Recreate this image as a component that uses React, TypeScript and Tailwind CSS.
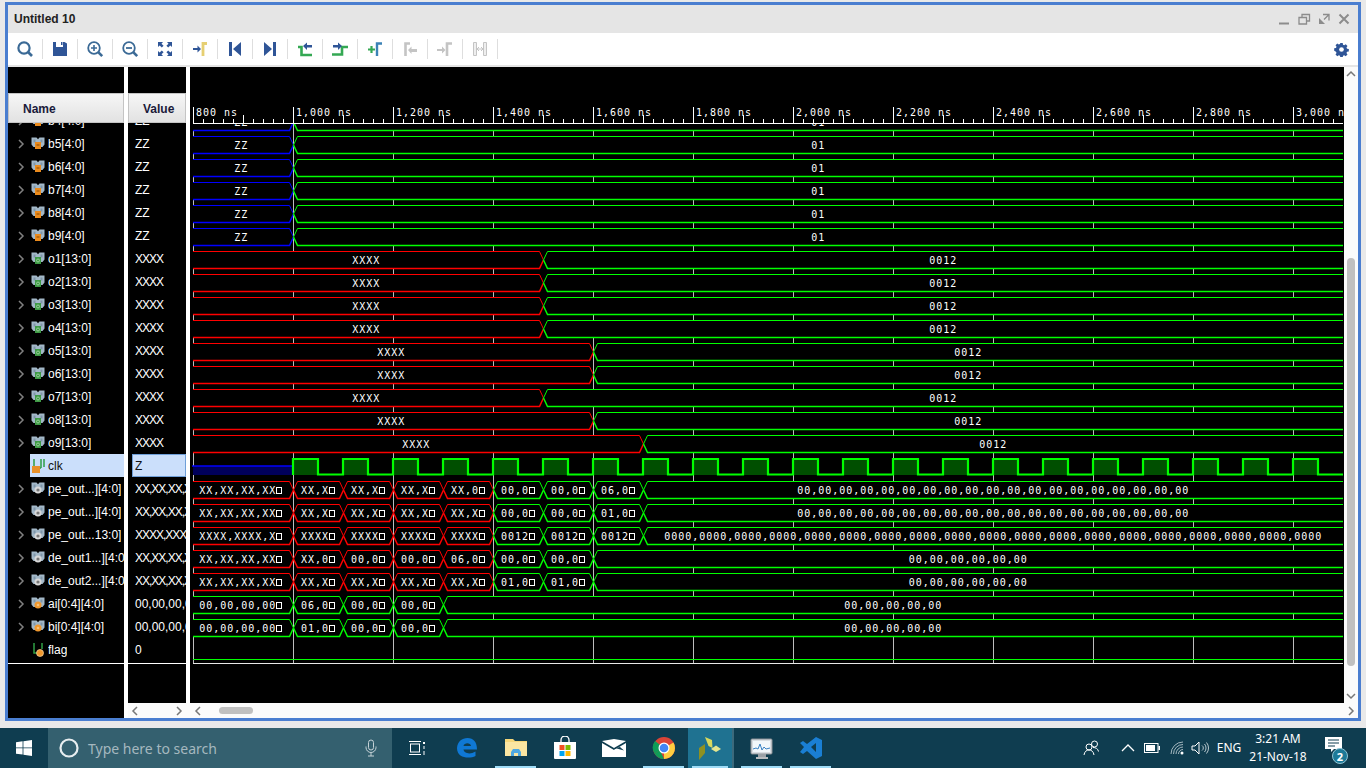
import React from "react";

const NAVY = "#2f5597";
const MONO = "'DejaVu Sans Mono', monospace";
const G = "#00ff00";
const R = "#ff0000";
const B = "#0000ff";

type Seg = [number, string, string];

const XL = "XX,XX,XX,XX□";
const OL = "00,00,00,00□";
const Z19 = Array(19).fill("00").join(",");
const Q19 = Array(19).fill("0000").join(",");
const Z6 = Array(6).fill("00").join(",");
const Z5 = Array(5).fill("00").join(",");

const waveRows: Seg[][] = [
  [[193, "ZZ", B], [293.5, "01", G]],
  [[193, "ZZ", B], [293.5, "01", G]],
  [[193, "ZZ", B], [293.5, "01", G]],
  [[193, "ZZ", B], [293.5, "01", G]],
  [[193, "ZZ", B], [293.5, "01", G]],
  [[193, "ZZ", B], [293.5, "01", G]],
  [[193, "XXXX", R], [543.5, "0012", G]],
  [[193, "XXXX", R], [543.5, "0012", G]],
  [[193, "XXXX", R], [543.5, "0012", G]],
  [[193, "XXXX", R], [543.5, "0012", G]],
  [[193, "XXXX", R], [593.5, "0012", G]],
  [[193, "XXXX", R], [593.5, "0012", G]],
  [[193, "XXXX", R], [543.5, "0012", G]],
  [[193, "XXXX", R], [593.5, "0012", G]],
  [[193, "XXXX", R], [643.5, "0012", G]],
];

const busRows: Seg[][] = [
  [[193, XL, R], [293.5, "XX,X□", R], [343.5, "XX,X□", R], [393.5, "XX,X□", R], [443.5, "XX,0□", R], [493.5, "00,0□", G], [543.5, "00,0□", G], [593.5, "06,0□", G], [643.5, Z19, G]],
  [[193, XL, R], [293.5, "XX,X□", R], [343.5, "XX,X□", R], [393.5, "XX,X□", R], [443.5, "XX,X□", R], [493.5, "00,0□", G], [543.5, "00,0□", G], [593.5, "01,0□", G], [643.5, Z19, G]],
  [[193, "XXXX,XXXX,X□", R], [293.5, "XXXX□", R], [343.5, "XXXX□", R], [393.5, "XXXX□", R], [443.5, "XXXX□", R], [493.5, "0012□", G], [543.5, "0012□", G], [593.5, "0012□", G], [643.5, Q19, G]],
  [[193, XL, R], [293.5, "XX,0□", R], [343.5, "00,0□", R], [393.5, "00,0□", R], [443.5, "06,0□", R], [493.5, "00,0□", G], [543.5, "00,0□", G], [593.5, Z6, G]],
  [[193, XL, R], [293.5, "XX,X□", R], [343.5, "XX,X□", R], [393.5, "XX,X□", R], [443.5, "XX,X□", R], [493.5, "01,0□", G], [543.5, "01,0□", G], [593.5, Z6, G]],
  [[193, OL, G], [293.5, "06,0□", G], [343.5, "00,0□", G], [393.5, "00,0□", G], [443.5, Z5, G]],
  [[193, OL, G], [293.5, "01,0□", G], [343.5, "00,0□", G], [393.5, "00,0□", G], [443.5, Z5, G]],
];

function BusRow({ segs, top }: { segs: Seg[]; top: number }) {
  const t = top + 0.5;
  const b = top + 17.5;
  const m = top + 9;
  return (
    <g>
      {segs.map(([a, text, color], i) => {
        const first = i === 0;
        const last = i === segs.length - 1;
        const e = last ? 1343 : segs[i + 1][0];
        const ax = first ? a : a + 4;
        const ex = last ? e : e - 4;
        const points = first
          ? `${a},${t} ${ex},${t} ${e},${m} ${ex},${b} ${a},${b}`
          : last
          ? `${a},${m} ${ax},${t} ${e},${t} ${e},${b} ${ax},${b}`
          : `${a},${m} ${ax},${t} ${ex},${t} ${e},${m} ${ex},${b} ${ax},${b}`;
        const topLine = first
          ? `${a},${t} ${ex},${t} ${e},${m}`
          : last
          ? `${a},${m} ${ax},${t} ${e},${t}`
          : `${a},${m} ${ax},${t} ${ex},${t} ${e},${m}`;
        const botLine = first
          ? `${a},${b} ${ex},${b} ${e},${m}`
          : last
          ? `${a},${m} ${ax},${b} ${e},${b}`
          : `${a},${m} ${ax},${b} ${ex},${b} ${e},${m}`;
        const center = (a + e) / 2 - (first ? 2 : 0);
        const boxed = text.endsWith("□");
        const body = boxed ? text.slice(0, -1) : text;
        const x0 = center - (text.length * 7) / 2;
        return (
          <g key={i}>
            <polygon points={points} fill="#000" />
            <polyline points={topLine} fill="none" stroke={color} strokeWidth={1} />
            <polyline points={botLine} fill="none" stroke={color} strokeWidth={1.5} />
            <text x={x0} y={top + 13} fill="#fff" fontFamily={MONO} fontSize={10} letterSpacing={0.98}>
              {body}
            </text>
            {boxed && (
              <rect x={Math.round(x0 + body.length * 7) + 0.5} y={top + 6.5} width={5} height={6} fill="none" stroke="#fff" strokeWidth={1} />
            )}
          </g>
        );
      })}
    </g>
  );
}

function Wave() {
  const majors = Array.from({ length: 12 }, (_, i) => 193.5 + i * 100);
  const labels = ["800 ns", "1,000 ns", "1,200 ns", "1,400 ns", "1,600 ns", "1,800 ns", "2,000 ns", "2,200 ns", "2,400 ns", "2,600 ns", "2,800 ns", "3,000 ns"];
  const minors = Array.from({ length: 115 }, (_, i) => 193.5 + i * 10);
  const clkX = Array.from({ length: 21 }, (_, i) => 293 + i * 50);
  let clk = "M293 475 L293 459";
  clkX.forEach((x, i) => {
    clk += ` L${x} 459 L${x + 25} 459 L${x + 25} 474.5 L${x + 50} 474.5`;
    if (i < clkX.length - 1) clk += ` L${x + 50} 459`;
  });
  return (
    <svg width={1154} height={636} viewBox="190 67 1154 636" className="block">
      <rect x={190} y={67} width={1154} height={636} fill="#000" />
      {majors.map((x) => (
        <line key={x} x1={x} x2={x} y1={123} y2={663} stroke="#bdbdbd" strokeWidth={1} />
      ))}
      {waveRows.map((segs, i) => (
        <BusRow key={i} segs={segs} top={113 + i * 23} />
      ))}
      <rect x={193} y={466} width={100} height={9} fill="#00005a" />
      <line x1={192} x2={293} y1={466} y2={466} stroke={B} strokeWidth={1.5} />
      {clkX.map((x) => (
        <rect key={x} x={x} y={459} width={25} height={16} fill="#004f00" />
      ))}
      <path d={clk} fill="none" stroke={G} strokeWidth={2.2} />
      {busRows.map((segs, i) => (
        <BusRow key={i} segs={segs} top={481 + i * 23} />
      ))}
      <line x1={193} x2={1343} y1={659.5} y2={659.5} stroke={G} strokeWidth={1} />
      <line x1={193} x2={1343} y1={663.5} y2={663.5} stroke="#e8e8e8" strokeWidth={1} />
      <rect x={190} y={67} width={1154} height={56.5} fill="#000" />
      <line x1={193} x2={1343} y1={123.5} y2={123.5} stroke="#fff" strokeWidth={1} />
      {minors.map((x, i) => (
        <line key={x} x1={x} x2={x} y1={i % 10 === 0 ? 107 : i % 5 === 0 ? 115 : 119} y2={123} stroke="#fff" strokeWidth={1} />
      ))}
      {labels.map((l, i) => (
        <text key={l} x={196 + i * 100} y={116} fill="#fff" fontFamily={MONO} fontSize={10} letterSpacing={0.98}>
          {l}
        </text>
      ))}
    </svg>
  );
}

type Kind = "b" | "o" | "p" | "a" | "clk" | "flag";

function NodeIcon({ kind }: { kind: Kind }) {
  if (kind === "clk")
    return (
      <svg width={14} height={16} viewBox="0 0 14 16">
        <path d="M3 1v9M3 10h7M10 10V1" stroke="#2f9e44" strokeWidth={1.5} fill="none" />
        <path d="M13 1v8" stroke="#2f9e44" strokeWidth={1.5} />
        <rect x={1} y={8} width={8} height={7} fill="#e8912a" />
      </svg>
    );
  if (kind === "flag")
    return (
      <svg width={14} height={16} viewBox="0 0 14 16">
        <path d="M3 1v10h4M11 1v6" stroke="#2f9e44" strokeWidth={1.5} fill="none" />
        <circle cx={9} cy={11} r={3.5} fill="#f0982e" stroke="#f8d8a8" strokeWidth={0.7} />
      </svg>
    );
  return (
    <svg width={14} height={13} viewBox="0 0 14 13">
      <path d="M0.500 0.500h5L7 2.200 8.500 0.500h5v7l-2 2.500h-9l-2-2.500z" fill="#a3b8c8" />
      <path d="M2.500 2.500h2v3h-2zM9.500 2.500h2v3h-2z" fill="#7f95a8" />
      {kind === "b" && (
        <>
          <rect x={4} y={5} width={6} height={7} fill="#ea8a1c" />
          <rect x={5.500} y={7} width={3} height={2} fill="#b86a10" />
        </>
      )}
      {kind === "o" && (
        <>
          <rect x={4} y={5} width={6} height={7} fill="#3f9a46" />
          <circle cx={7} cy={8.500} r={1.500} fill="none" stroke="#a7dba8" strokeWidth={0.8} />
        </>
      )}
      {kind === "p" && (
        <>
          <circle cx={7} cy={8} r={3.500} fill="#d8d8d8" />
          <circle cx={7} cy={8} r={1.600} fill="#777" />
        </>
      )}
      {kind === "a" && (
        <>
          <circle cx={7} cy={8} r={3.500} fill="#f0982e" />
          <circle cx={7} cy={8} r={1.300} fill="#f8c27a" />
        </>
      )}
    </svg>
  );
}

const rows: { name: string; value: string; kind: Kind; sel?: boolean }[] = [
  { name: "b4[4:0]", value: "ZZ", kind: "b" },
  { name: "b5[4:0]", value: "ZZ", kind: "b" },
  { name: "b6[4:0]", value: "ZZ", kind: "b" },
  { name: "b7[4:0]", value: "ZZ", kind: "b" },
  { name: "b8[4:0]", value: "ZZ", kind: "b" },
  { name: "b9[4:0]", value: "ZZ", kind: "b" },
  { name: "o1[13:0]", value: "XXXX", kind: "o" },
  { name: "o2[13:0]", value: "XXXX", kind: "o" },
  { name: "o3[13:0]", value: "XXXX", kind: "o" },
  { name: "o4[13:0]", value: "XXXX", kind: "o" },
  { name: "o5[13:0]", value: "XXXX", kind: "o" },
  { name: "o6[13:0]", value: "XXXX", kind: "o" },
  { name: "o7[13:0]", value: "XXXX", kind: "o" },
  { name: "o8[13:0]", value: "XXXX", kind: "o" },
  { name: "o9[13:0]", value: "XXXX", kind: "o" },
  { name: "clk", value: "Z", kind: "clk", sel: true },
  { name: "pe_out...][4:0]", value: "XX,XX,XX,XX,XX", kind: "p" },
  { name: "pe_out...][4:0]", value: "XX,XX,XX,XX,XX", kind: "p" },
  { name: "pe_out...13:0]", value: "XXXX,XXXX,XXXX", kind: "p" },
  { name: "de_out1...][4:0]", value: "XX,XX,XX,XX,XX", kind: "p" },
  { name: "de_out2...][4:0]", value: "XX,XX,XX,XX,XX", kind: "p" },
  { name: "ai[0:4][4:0]", value: "00,00,00,00,00", kind: "a" },
  { name: "bi[0:4][4:0]", value: "00,00,00,00,00", kind: "a" },
  { name: "flag", value: "0", kind: "flag" },
];

function Chev({ dir, color = "#777" }: { dir: "l" | "r" | "u" | "d"; color?: string }) {
  const d = { l: "M6 1 2 5l4 4", r: "M2 1l4 4-4 4", u: "M1 6l4-4 4 4", d: "M1 3l4 4 4-4" }[dir];
  const w = dir === "l" || dir === "r" ? 8 : 10;
  return (
    <svg width={w} height={10} viewBox={`0 0 ${w} 10`} className="shrink-0">
      <path d={d} fill="none" stroke={color} strokeWidth={1.5} />
    </svg>
  );
}

function Header({ label, pl }: { label: string; pl: string }) {
  return (
    <div className={`h-[30px] flex items-center pt-[2px] bg-gradient-to-b from-[#f6f6f6] to-[#e2e2e2] border border-[#c4c4c4] text-[12px] font-bold text-[#1a1a3a] ${pl}`}>
      {label}
    </div>
  );
}

function NameColumn() {
  return (
    <div className="w-[116px] h-full bg-black flex flex-col shrink-0">
      <div className="h-[26px] shrink-0" />
      <Header label="Name" pl="pl-[14px]" />
      <div className="h-[540px] overflow-hidden shrink-0">
        <div className="-mt-[14px]">
          {rows.map((r, i) => (
            <div key={i} className="h-[23px] flex items-center">
              <div className="w-[9px] shrink-0" />
              <div className="w-[13px] shrink-0 flex justify-start">
                {!r.sel && r.kind !== "flag" && <Chev dir="r" color="#808080" />}
              </div>
              <div className={`flex-1 min-w-0 flex items-center h-full pl-[1px] ${r.sel ? "bg-[#cbdffb] text-[#111]" : "text-white"}`}>
                <div className="w-[17px] shrink-0 flex items-center">
                  <NodeIcon kind={r.kind} />
                </div>
                <span className="whitespace-nowrap overflow-hidden text-[12px]">{r.name}</span>
              </div>
            </div>
          ))}
        </div>
      </div>
      <div className="h-px bg-white shrink-0" />
    </div>
  );
}

function ValueColumn() {
  return (
    <div className="w-[58px] h-full bg-black flex flex-col shrink-0">
      <div className="h-[26px] shrink-0" />
      <Header label="Value" pl="pl-[14px]" />
      <div className="h-[540px] overflow-hidden shrink-0">
        <div className="-mt-[14px]">
          {rows.map((r, i) => (
            <div key={i} className="h-[23px] flex items-center pl-[4px]">
              <div className={`w-full h-full flex items-center overflow-hidden whitespace-nowrap text-[12px] ${r.value.includes("X") ? "tracking-[-1px]" : ""} ${r.sel ? "bg-[#cbdffb] text-[#111] border border-[#6f9fd8] pl-[2px]" : "text-white pl-[3px]"}`}>
                {r.value}
              </div>
            </div>
          ))}
        </div>
      </div>
      <div className="h-px bg-white shrink-0" />
    </div>
  );
}

function I({ children }: { children: React.ReactNode }) {
  return (
    <svg width={20} height={20} viewBox="0 0 20 20">
      {children}
    </svg>
  );
}

const GR = "#c4c4c4";
const tools: React.ReactNode[] = [
  <I><circle cx={9} cy={9} r={5.6} fill="none" stroke="#3b6a96" strokeWidth={2.2} /><path d="M13 13l4 4" stroke="#3b6a96" strokeWidth={2.6} /></I>,
  <I><path d="M3 3h3v5h7V3h1.500L17 4.500V17H3z M11 3h1.500v3H11z" fill={NAVY} /></I>,
  <I><circle cx={9} cy={9} r={5.8} fill="none" stroke="#3b6a96" strokeWidth={1.8} /><path d="M13.200 13.200l4 4" stroke="#3b6a96" strokeWidth={2.6} /><path d="M6 9h6M9 6v6" stroke="#3b6a96" strokeWidth={1.6} /></I>,
  <I><circle cx={9} cy={9} r={5.8} fill="none" stroke="#3b6a96" strokeWidth={1.8} /><path d="M13.200 13.200l4 4" stroke="#3b6a96" strokeWidth={2.6} /><path d="M6 9h6" stroke="#3b6a96" strokeWidth={1.8} /></I>,
  <I><path d="M3 3h5L6.500 4.700 8.600 6.800 6.800 8.600 4.700 6.500 3 8zM17 3v5l-1.700-1.500-2.100 2.100-1.800-1.800 2.100-2.100L12 3zM3 17v-5l1.700 1.500 2.100-2.100 1.800 1.800-2.100 2.100L8 17zM17 17h-5l1.500-1.700-2.100-2.100 1.800-1.800 2.100 2.100L17 12z" fill={NAVY} /></I>,
  <I><path d="M3 9h4.500V6.500L11 10l-3.500 3.500V11H3z" fill={NAVY} /><path d="M17 4.500h-4V17" fill="none" stroke="#e6cf72" strokeWidth={2.8} /></I>,
  <I><path d="M4 3h3v14H4z M16 3v14L8 10z" fill={NAVY} /></I>,
  <I><path d="M13 3h3v14h-3z M4 3v14l8-7z" fill={NAVY} /></I>,
  <I><path d="M3 8h3.500v8H17" fill="none" stroke="#34a853" strokeWidth={2.6} /><path d="M8 7l4-3.500V6h5v2.500h-5V11z" fill={NAVY} /></I>,
  <I><path d="M2 15.500h10V8h6" fill="none" stroke="#34a853" strokeWidth={2.6} /><path d="M12 7L8 3.500V6H3v2.500h5V11z" fill={NAVY} /></I>,
  <I><path d="M3 10.500h7M6.500 7v7" stroke="#34a853" strokeWidth={2.2} /><path d="M17 4.500h-5V17" fill="none" stroke="#3b82b6" strokeWidth={2.4} /></I>,
  <I><path d="M10 4.500H5.500V17" fill="none" stroke={GR} strokeWidth={2.6} /><path d="M8 11l3.500-3.500v2.500H17v3h-5.500v2z" fill={GR} /></I>,
  <I><path d="M2 10h5V7.500l3.500 3.500L7 14.500V12H2z" fill={GR} /><path d="M17 4.500h-5V17" fill="none" stroke={GR} strokeWidth={2.6} /></I>,
  <I><path d="M3.500 3.500h3v13h-3zM13.500 3.500h3v13h-3z" fill="#eee" stroke={GR} /><path d="M7 10h6M7 10l2-2M7 10l2 2M13 10l-2-2M13 10l-2 2" stroke={GR} strokeWidth={1} fill="none" /></I>,
];

function Toolbar() {
  return (
    <div className="h-[32px] bg-white flex items-center shrink-0">
      {tools.map((t, i) => (
        <div key={i} className="w-[35px] h-[20px] flex items-center justify-center border-r border-[#dedede] shrink-0">
          {t}
        </div>
      ))}
      <div className="flex-1" />
      <div className="pr-[9px] flex items-center">
        <svg width={15} height={15} viewBox="0 0 16 16">
          <path d="M6.700 1h2.600l.3 1.900 1.300.6 1.600-1.100 1.900 1.900-1.100 1.600.6 1.300 1.900.3v2.600l-1.900.3-.6 1.300 1.100 1.600-1.900 1.900-1.600-1.100-1.300.6-.3 1.900H6.700l-.3-1.900-1.300-.6-1.600 1.100-1.900-1.900 1.100-1.600-.6-1.300L.200 9.300V6.700l1.900-.3.6-1.300-1.100-1.600 1.900-1.900 1.600 1.100 1.300-.6z" fill={NAVY} />
          <circle cx={8} cy={8} r={2.500} fill="#fff" />
        </svg>
      </div>
    </div>
  );
}

function TitleBar() {
  return (
    <div className="h-[28px] bg-[#e5e5e5] flex items-center shrink-0 pl-[6px] pr-[4px]">
      <span className="text-[12px] font-bold text-[#222]">Untitled 10</span>
      <div className="flex-1" />
      <div className="flex items-center">
        <svg width={20} height={20} viewBox="0 0 20 20"><path d="M5 14.500h10" stroke="#8c8c8c" strokeWidth={2} /></svg>
        <svg width={20} height={20} viewBox="0 0 20 20"><path d="M8 8V5.500h7.500V12H12.500M5 8.500h7.500V15H5z" fill="none" stroke="#8c8c8c" strokeWidth={1.300} /></svg>
        <svg width={20} height={20} viewBox="0 0 20 20"><path d="M9 5.500h6V11.500M15 5.500L10 10.500" fill="none" stroke="#8c8c8c" strokeWidth={1.300} /><path d="M5 9v6h6z" fill="#8c8c8c" /></svg>
        <svg width={20} height={20} viewBox="0 0 20 20"><path d="M5.500 5.500l9 9M14.500 5.500l-9 9" stroke="#8c8c8c" strokeWidth={2} /></svg>
      </div>
    </div>
  );
}

function Content() {
  return (
    <div className="flex-1 min-h-0 flex bg-[#fbfbfb]">
      <NameColumn />
      <div className="w-[4px] bg-white shrink-0" />
      <div className="flex-1 min-w-0 flex flex-col">
        <div className="flex h-[636px] shrink-0">
          <div className="w-[58px] shrink-0 h-[636px] overflow-hidden">
            <ValueColumn />
          </div>
          <div className="w-[4px] bg-white shrink-0" />
          <Wave />
          <div className="flex-1 flex flex-col items-center pt-[3px] bg-[#fbfbfb]">
            <Chev dir="u" />
            <div className="w-[8px] h-[408px] mt-[178px] bg-[#c0c0c0] rounded-t-[4px] rounded-b-[4px] shrink-0" />
            <div className="mt-[25px]"><Chev dir="d" /></div>
          </div>
        </div>
        <div className="flex-1 flex items-center bg-[#fbfbfb]">
          <div className="w-[58px] flex justify-between items-center px-[3px] shrink-0">
            <Chev dir="l" />
            <Chev dir="r" />
          </div>
          <div className="w-[8px] shrink-0" />
          <Chev dir="l" />
          <div className="w-[34px] h-[7px] ml-[17px] bg-[#c0c0c0] rounded-full shrink-0" />
          <div className="flex-1" />
          <div className="pr-[3px]"><Chev dir="r" /></div>
        </div>
      </div>
    </div>
  );
}

function Slot({ w, active, under, children }: { w: string; active?: boolean; under?: boolean; children: React.ReactNode }) {
  return (
    <div className={`${w} h-full flex flex-col shrink-0 ${active ? "bg-[#1f7291]" : ""}`}>
      <div className="flex-1 flex items-center justify-center pt-[2px]">{children}</div>
      <div className="h-[2px] flex justify-center">
        {under && <div className="w-[82%] h-full bg-[#9fdcf7]" />}
      </div>
    </div>
  );
}

function Taskbar() {
  return (
    <div className="h-[40px] bg-[#0f3d50] flex items-stretch shrink-0" style={{ fontFamily: "'Noto Sans', sans-serif" }}>
      <div className="w-[48px] flex items-center justify-center shrink-0">
        <svg width={16} height={16} viewBox="0 0 16 16">
          <path d="M0 2.300 6.600 1.300v6.200H0zM7.400 1.200 16 0v7.500H7.400zM0 8.300h6.600v6.300L0 13.700zM7.400 8.300H16V16l-8.600-1.200z" fill="#fff" />
        </svg>
      </div>
      <div className="w-[344px] bg-[#34606f] flex items-center shrink-0 pl-[11px] pr-[15px]">
        <svg width={20} height={20} viewBox="0 0 20 20"><circle cx={10} cy={10} r={8.500} fill="none" stroke="#e8eef0" strokeWidth={2.200} /></svg>
        <span className="ml-[9px] text-[14px] text-[#a5b8bf]">Type here to search</span>
        <div className="flex-1" />
        <svg width={12} height={18} viewBox="0 0 12 18"><rect x={3.500} y={1} width={5} height={10} rx={2.500} fill="none" stroke="#c5d2d7" /><path d="M1 7.500v1a5 5 0 0 0 10 0v-1M6 13.500V17M3 17h6" fill="none" stroke="#c5d2d7" /></svg>
      </div>
      <Slot w="w-[50px]">
        <svg width={16} height={16} viewBox="0 0 16 16"><path d="M0 1.500h12M0 14.500h12" stroke="#fff" /><rect x={1.500} y={4} width={9} height={8} fill="none" stroke="#fff" /><rect x={14} y={2} width={2} height={2} fill="#fff" /><path d="M15 6v3M15 11v4" stroke="#fff" /></svg>
      </Slot>
      <Slot w="w-[49px]">
        <svg width={22} height={22} viewBox="0 0 22 22">
          <path d="M1 11C1.500 4.500 6 1 11.500 1 17.500 1 21 5 21 12.500H7.500c.3 3.700 6.500 5.500 12 2v4.500c-6 3-18.500 2.500-18.500-8zM7.500 9h7.500c-.3-3.800-7-3.800-7.500 0z" fill="#0f78d4" fillRule="evenodd" />
        </svg>
      </Slot>
      <Slot w="w-[49px]" under>
        <svg width={22} height={20} viewBox="0 0 22 20">
          <path d="M0 1h8l2 2h12v15H0z" fill="#f6d77a" />
          <path d="M0 4h22v14H0z" fill="#fbe6a2" />
          <path d="M6 18v-4l2-3h6l2 3v4h-3v-3H9v3z" fill="#4fa8e0" />
        </svg>
      </Slot>
      <Slot w="w-[49px]">
        <svg width={24} height={24} viewBox="0 0 24 24">
          <path d="M8 6V4a4 4 0 0 1 8 0v2" fill="none" stroke="#fff" strokeWidth={1.300} />
          <path d="M1 6h22v16a1 1 0 0 1-1 1H2a1 1 0 0 1-1-1z" fill="#fff" />
          <rect x={6.500} y={9} width={5} height={5} fill="#f25022" />
          <rect x={12.500} y={9} width={5} height={5} fill="#7fba00" />
          <rect x={6.500} y={15} width={5} height={5} fill="#00a4ef" />
          <rect x={12.500} y={15} width={5} height={5} fill="#ffb900" />
        </svg>
      </Slot>
      <Slot w="w-[50px]">
        <svg width={24} height={18} viewBox="0 0 24 18">
          <path d="M0 2 12 0l12 2-12 7z" fill="#fff" />
          <path d="M0 4l12 7 5-3 7 7V18H0z" fill="#fff" />
          <path d="M12 11l12 6V4z" fill="#fff" />
          <path d="M13 9l9 2.500-4-3.500z" fill="#0f3d50" />
        </svg>
      </Slot>
      <Slot w="w-[49px]" under>
        <svg width={24} height={24} viewBox="0 0 24 24">
          <circle cx={12} cy={12} r={11} fill="#db4437" />
          <path d="M12 12 2.500 17.500A11 11 0 0 1 3 5z" fill="#0f9d58" />
          <path d="M12 12 21.500 6.500A11 11 0 0 1 12 23z" fill="#ffcd40" />
          <path d="M12 23 A11 11 0 0 1 2.500 17.500L8 14z" fill="#0f9d58" />
          <circle cx={12} cy={12} r={5.500} fill="#fff" />
          <circle cx={12} cy={12} r={4.300} fill="#4285f4" />
        </svg>
      </Slot>
      <Slot w="w-[44px]" active under>
        <svg width={24} height={24} viewBox="0 0 24 24">
          <path d="M7 1l7 3 .5 8-4-2z" fill="#d9d95e" />
          <path d="M13 13l5-3.500 5 3.500-5 3z" fill="#e6e68f" />
          <path d="M1 12l6-4v9l-6 7z" fill="#8f9122" />
        </svg>
      </Slot>
      <div className="w-[2px] bg-[#3c6a7c] shrink-0" />
      <div className="w-[3px] shrink-0" />
      <Slot w="w-[49px]" under>
        <svg width={24} height={24} viewBox="0 0 24 24">
          <rect x={1} y={3} width={21} height={15} rx={1} fill="#d8dde2" stroke="#8a8f94" />
          <rect x={3} y={5} width={17} height={11} fill="#f2f7fb" />
          <path d="M3 13l3-1 2 1 2-5 2 6 2-3 2 2 4-1" fill="none" stroke="#3b82c4" strokeWidth={1} />
          <path d="M8 18v3h8v-3" fill="#9aa0a6" />
          <path d="M6 21h12v2H6z" fill="#b8bcc0" />
        </svg>
      </Slot>
      <Slot w="w-[49px]" under>
        <svg width={24} height={24} viewBox="0 0 24 24">
          <path d="M17 1l6 3v16l-6 3-9-8-4 3-3-2 4-5-4-4 3-2 4 3zM17 7l-5 4 5 5z" fill="#1a7fd4" fillRule="evenodd" />
        </svg>
      </Slot>
      <div className="flex-1" />
      <div className="flex items-center text-white shrink-0 h-full">
        <svg width={18} height={18} viewBox="0 0 18 18" className="mr-[20px]">
          <circle cx={11.500} cy={5} r={3} fill="none" stroke="#fff" />
          <circle cx={6} cy={8} r={3} fill="none" stroke="#fff" />
          <path d="M1 16c.5-3.500 2.500-5 5-5s4.500 1.500 5 5M10 8.500c2.500 0 5 1 5.500 4" fill="none" stroke="#fff" />
        </svg>
        <svg width={14} height={10} viewBox="0 0 14 10" className="mr-[9px]"><path d="M1 8l6-6 6 6" fill="none" stroke="#fff" strokeWidth={1.300} /></svg>
        <svg width={16} height={10} viewBox="0 0 16 10" className="mr-[10px]"><rect x={0.500} y={0.500} width={13.500} height={9} fill="none" stroke="#fff" /><rect x={2} y={2} width={9} height={6} fill="#fff" /><rect x={14.500} y={3} width={1.500} height={4} fill="#fff" /></svg>
        <svg width={14} height={14} viewBox="0 0 14 14" className="mr-[7px]"><path d="M1 13A12 12 0 0 1 13 1M3.500 13A9.500 9.500 0 0 1 13 3.500M6 13a7 7 0 0 1 7-7M8.500 13a4.500 4.500 0 0 1 4.500-4.500" fill="none" stroke="#c9d6db" strokeWidth={0.800} /><circle cx={12} cy={12} r={1.500} fill="#fff" /></svg>
        <svg width={18} height={14} viewBox="0 0 18 14" className="mr-[5px]"><path d="M1 5h3l4-4v12L4 9H1z" fill="none" stroke="#fff" /><path d="M11 4.500a3 3 0 0 1 0 5M13.500 3a6 6 0 0 1 0 8M15.500 1.500a8.500 8.500 0 0 1 0 11" fill="none" stroke="#b7c7cd" /></svg>
        <span className="text-[12px] w-[30px] text-center">ENG</span>
        <div className="w-[68px] text-center text-[12px] leading-[18px] mr-[5px]">
          <div>3:21 AM</div>
          <div>21-Nov-18</div>
        </div>
        <div className="w-[34px] h-full flex items-center justify-center relative">
          <svg width={18} height={16} viewBox="0 0 18 16" className="-mt-[6px]"><path d="M0 0h17v12H9l-3 3v-3H0z" fill="#fff" /><path d="M3 3h11M3 6h11M3 9h7" stroke="#0f3d50" /></svg>
          <div className="absolute left-[15px] top-[20px] w-[16px] h-[16px] rounded-full bg-[#1c7a98] border border-[#8fc4d4] flex items-center justify-center text-[11px] font-bold leading-none">2</div>
        </div>
        <div className="w-[15px]" />
      </div>
    </div>
  );
}

export default function App() {
  return (
    <div className="w-[1366px] h-[768px] overflow-hidden flex flex-col bg-[#e9e9e9]" style={{ fontFamily: "'Liberation Sans', Arial, sans-serif" }}>
      <div className="h-[728px] shrink-0 pl-[5px] pr-[5px] pt-[2px] pb-[7px]">
        <div className="h-full bg-white border-[3px] border-[#4a7ed0] flex flex-col">
          <TitleBar />
          <Toolbar />
          <div className="h-[2px] bg-[#e5e5e5] shrink-0" />
          <Content />
        </div>
      </div>
      <Taskbar />
    </div>
  );
}
